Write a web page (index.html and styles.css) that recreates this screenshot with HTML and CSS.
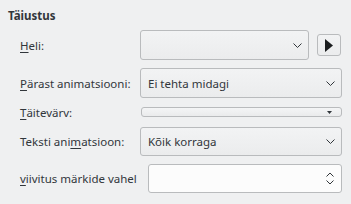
FILE: index.html
```html
<!DOCTYPE html>
<html>
<head>
<meta charset="utf-8">
<link rel="stylesheet" href="styles.css">
</head>
<body>
<div class="page">
  <div class="title">Täiustus</div>
  <div class="form">
    <div class="label"><u>H</u>eli:</div>
    <div class="ctrl row-heli">
      <div class="combo heli">
        <span class="val"></span>
        <svg class="chev" width="9" height="5" viewBox="0 0 9 5"><path d="M0.5 0.5 L4.5 4.5 L8.5 0.5" fill="none" stroke="#31363b" stroke-width="1"/></svg>
      </div>
      <div class="play">
        <svg width="8" height="13" viewBox="0 0 8 13"><path d="M0 0 L8 6.5 L0 13 Z" fill="#1b1d1f"/></svg>
      </div>
    </div>

    <div class="label"><u>P</u>ärast animatsiooni:</div>
    <div class="ctrl">
      <div class="combo">
        <span class="val">Ei tehta midagi</span>
        <svg class="chev" width="9" height="5" viewBox="0 0 9 5"><path d="M0.5 0.5 L4.5 4.5 L8.5 0.5" fill="none" stroke="#31363b" stroke-width="1"/></svg>
      </div>
    </div>

    <div class="label"><u>T</u>äitevärv:</div>
    <div class="ctrl">
      <div class="color">
        <svg width="5" height="3" viewBox="0 0 5 3"><path d="M0 0 L5 0 L2.5 3 Z" fill="#31363b"/></svg>
      </div>
    </div>

    <div class="label">Teksti ani<u>m</u>atsioon:</div>
    <div class="ctrl">
      <div class="combo">
        <span class="val">Kõik korraga</span>
        <svg class="chev" width="9" height="5" viewBox="0 0 9 5"><path d="M0.5 0.5 L4.5 4.5 L8.5 0.5" fill="none" stroke="#31363b" stroke-width="1"/></svg>
      </div>
    </div>

    <div class="label"><u>v</u>iivitus märkide vahel</div>
    <div class="ctrl spin-wrap">
      <div class="spin">
        <span class="val"></span>
        <div class="arrows">
          <svg width="8" height="5" viewBox="0 0 8 5"><path d="M0.5 4.5 L4 1 L7.5 4.5" fill="none" stroke="#31363b" stroke-width="1"/></svg>
          <svg width="8" height="5" viewBox="0 0 8 5"><path d="M0.5 0.5 L4 4 L7.5 0.5" fill="none" stroke="#31363b" stroke-width="1"/></svg>
        </div>
      </div>
    </div>
  </div>
</div>
</body>
</html>
```
FILE: styles.css
```css
html, body {
  margin: 0;
  padding: 0;
  background: #eff0f1;
}
body {
  font-family: "Noto Sans", "DejaVu Sans", sans-serif;
  font-size: 11.5px;
  color: #31363b;
  width: 351px;
  height: 204px;
  overflow: hidden;
}
.page {
  padding: 8px 9px 0 8px;
}
.title {
  font-weight: bold;
  height: 22px;
  line-height: 16px;
}
.form {
  display: grid;
  grid-template-columns: 120px 1fr;
  grid-template-rows: 30px 30px 13px 29px 29px;
  row-gap: 8px;
  padding-left: 12px;
}
.label {
  display: flex;
  align-items: center;
  white-space: nowrap;
}
.label u {
  text-underline-offset: 2px;
}
.ctrl {
  display: flex;
  align-items: stretch;
}
.combo {
  flex: 1;
  display: flex;
  align-items: center;
  justify-content: space-between;
  border: 1px solid #b9bbbd;
  border-radius: 3px;
  background: linear-gradient(#f2f3f4, #ebeced);
  padding: 0 6px 0 7px;
  box-sizing: border-box;
}
.combo.heli {
  flex: 0 0 169px;
}
.row-heli {
  gap: 8px;
  align-items: stretch;
}
.play {
  width: 24px;
  height: 22px;
  margin-top: 4px;
  box-sizing: border-box;
  border: 1px solid #b9bbbd;
  border-radius: 3px;
  background: linear-gradient(#f2f3f4, #ebeced);
  display: flex;
  align-items: center;
  justify-content: center;
}
.color {
  flex: 1;
  margin: 1px 0 2px 1px;
  border: 1px solid #b9bbbd;
  border-radius: 3px;
  background: linear-gradient(#f4f5f6, #eaebec);
  display: flex;
  align-items: center;
  justify-content: flex-end;
  padding-right: 9px;
}
.spin-wrap {
  padding-left: 8px;
}
.spin {
  flex: 1;
  display: flex;
  align-items: center;
  justify-content: space-between;
  border: 1px solid #b9bbbd;
  border-radius: 3px;
  background: #fcfcfc;
  padding: 0 7px 0 7px;
}
.arrows {
  display: flex;
  flex-direction: column;
  gap: 3px;
}
.arrows svg {
  display: block;
}
```
